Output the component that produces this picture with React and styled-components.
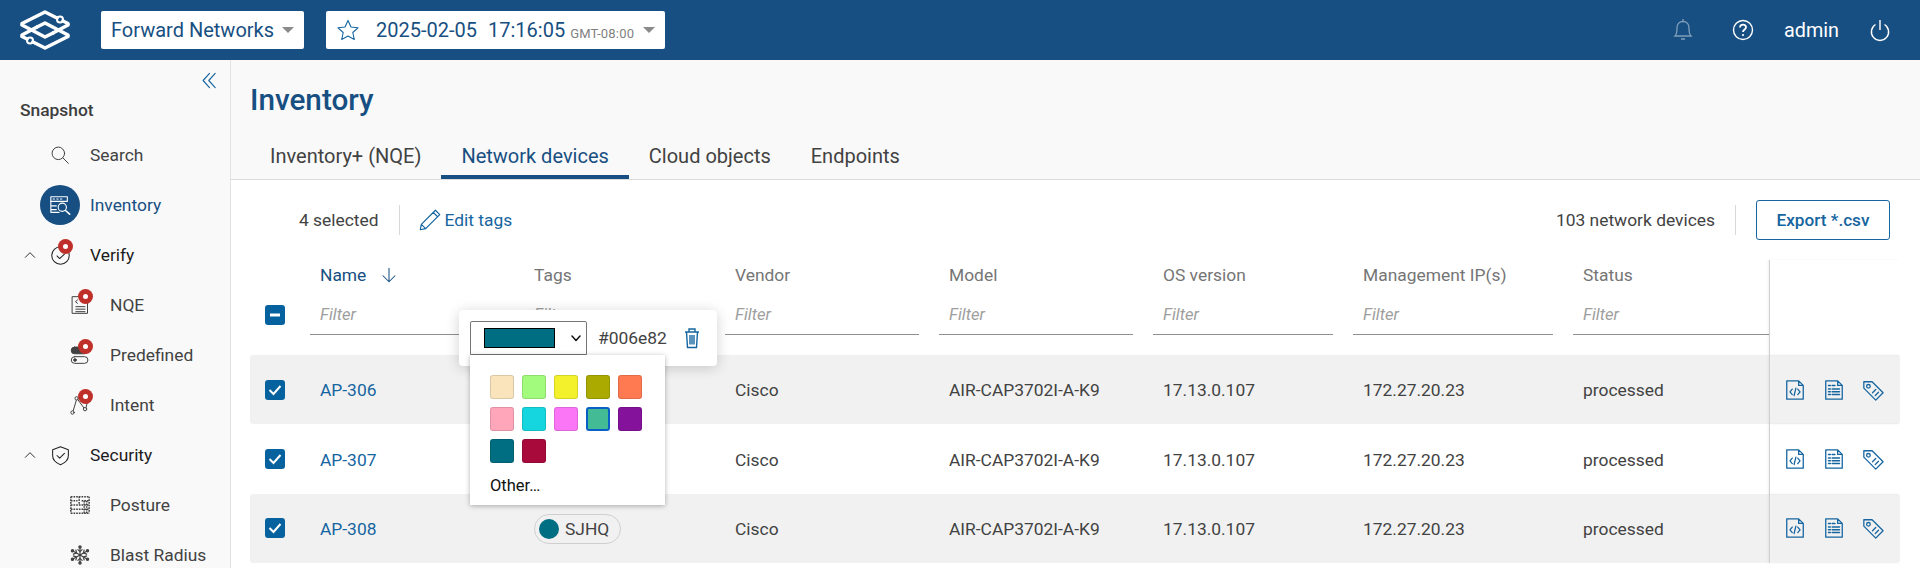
import React from 'react';
import styled, { createGlobalStyle } from 'styled-components';

const NAVY = '#174f82';
const BLUE = '#1565a0';
const TEXT = '#424242';
const GRID = '60px 214px 201px 214px 214px 200px 220px 196px 131px';

const GlobalStyle = createGlobalStyle`
  html, body {
    margin: 0;
    height: 100%;
    overflow: hidden;
    background: #fff;
    font-family: Roboto, "Liberation Sans", sans-serif;
    color: ${TEXT};
  }
  * { box-sizing: border-box; }
`;

const Page = styled.div`
  display: flex;
  flex-direction: column;
  height: 568px;
  overflow: hidden;
`;

const TopBar = styled.header`
  flex: 0 0 60px;
  display: flex;
  align-items: center;
  padding: 0 29px 0 20px;
  background: ${NAVY};
`;

const LogoMark = styled.svg`
  width: 50px;
  height: 40px;
  margin-right: 31px;
`;

const Picker = styled.div`
  display: flex;
  align-items: center;
  height: 38px;
  margin-right: 22px;
  padding: 0 10px;
  background: #fff;
  border-radius: 2px;
  color: ${NAVY};
  font-size: 20px;
  white-space: nowrap;
`;

const Caret = styled.span`
  width: 0;
  height: 0;
  margin-left: ${props => props.$gap}px;
  border-left: 6px solid transparent;
  border-right: 6px solid transparent;
  border-top: 6px solid #8a8a8a;
`;

const Zone = styled.span`
  margin-left: 5px;
  color: #7f7f7f;
  font-size: 13px;
  letter-spacing: 0.2px;
  align-self: flex-end;
  padding-bottom: 8px;
`;

const Stamp = styled.span`
  margin-left: 16px;
  & + & { margin-left: 11px; }
`;

const TopActions = styled.div`
  display: flex;
  align-items: center;
  margin-left: auto;
  color: #fff;
  font-size: 19.8px;
`;

const TopIcon = styled.svg`
  width: 22px;
  height: 24px;
  margin-left: ${props => props.$gap}px;
  opacity: ${props => (props.$dim ? 0.45 : 1)};
`;

const UserName = styled.span`
  margin-left: 30px;
`;

const Body = styled.div`
  flex: 1;
  display: flex;
  min-height: 0;
`;

const Sidebar = styled.aside`
  flex: 0 0 231px;
  padding-top: 12px;
  background: #f9f9f9;
  border-right: 1px solid #e2e2e2;
  overflow: hidden;
`;

const Collapse = styled.div`
  display: flex;
  justify-content: flex-end;
  height: 16px;
  padding-right: 12px;
`;

const SideTitle = styled.div`
  height: 42px;
  padding: 12px 0 0 20px;
  color: #3d3d3d;
  font-size: 17.4px;
  font-weight: 500;
  line-height: 20px;
`;

const SideRow = styled.div`
  display: flex;
  align-items: center;
  height: 50px;
  padding-left: ${props => (props.$child ? 40 : 20)}px;
  color: ${props => (props.$active ? NAVY : props.$group ? '#1c1c1c' : TEXT)};
  font-size: 17.4px;
`;

const Toggle = styled.span`
  flex: 0 0 20px;
  display: flex;
  justify-content: center;
`;

const IconSlot = styled.span`
  position: relative;
  flex: 0 0 40px;
  height: 40px;
  margin-right: 10px;
  display: flex;
  align-items: center;
  justify-content: center;
  border-radius: 50%;
  background: ${props => (props.$active ? NAVY : 'transparent')};
  margin-left: ${props => (props.$child ? 20 : 0)}px;
`;

const Badge = styled.span`
  position: absolute;
  top: 4px;
  left: 18px;
  width: 15px;
  height: 15px;
  border-radius: 50%;
  background: #c0302a;
  &::after {
    content: '';
    position: absolute;
    top: 5px;
    left: 5px;
    width: 5px;
    height: 5px;
    border-radius: 50%;
    background: #fff;
  }
`;

const Main = styled.main`
  flex: 1;
  min-width: 0;
`;

const MainHead = styled.div`
  height: 120px;
  padding: 0 0 0 19px;
  display: flex;
  flex-direction: column;
  background: #f9f9f9;
  border-bottom: 1px solid #dcdcdc;
`;

const PageTitle = styled.h1`
  margin: 0;
  padding-top: 20px;
  height: 76px;
  color: ${NAVY};
  font-size: 29.7px;
  font-weight: 500;
  line-height: 40px;
`;

const Tabs = styled.nav`
  display: flex;
  height: 43px;
`;

const Tab = styled.div`
  padding: 8px 20px 0;
  color: ${props => (props.$on ? NAVY : TEXT)};
  font-size: 20px;
  line-height: 24px;
  border-bottom: 4px solid ${props => (props.$on ? NAVY : 'transparent')};
`;

const Content = styled.div`
  padding: 0 20px 0 19px;
`;

const Toolbar = styled.div`
  display: flex;
  align-items: center;
  height: 80px;
  padding: 0 10px 0 49px;
  font-size: 17.4px;
`;

const Rule = styled.span`
  width: 1px;
  height: 30px;
  margin: 0 20px;
  background: #d8d8d8;
`;

const EditLink = styled.span`
  display: flex;
  align-items: center;
  gap: 2px;
  margin-left: -3px;
  color: ${BLUE};
`;

const Count = styled.span`
  margin-left: auto;
`;

const ExportButton = styled.button`
  width: 134px;
  height: 40px;
  padding: 0;
  background: #fff;
  border: 1px solid ${BLUE};
  border-radius: 3px;
  color: ${BLUE};
  font: 500 17.2px Roboto, sans-serif;
`;

const TableWrap = styled.div`
  position: relative;
`;

const Grid = styled.div`
  display: grid;
  grid-template-columns: ${GRID};
  align-items: stretch;
`;

const HeadRow = styled(Grid)`
  height: 95px;
`;

const HeadCell = styled.div`
  padding-right: ${props => (props.$last ? 0 : 20)}px;
  display: flex;
  flex-direction: column;
`;

const HeadLabel = styled.div`
  display: flex;
  align-items: center;
  gap: 14px;
  height: 30px;
  padding-left: 10px;
  color: ${props => (props.$sorted ? NAVY : '#757575')};
  font-size: 17.4px;
`;

const FilterBox = styled.div`
  height: 45px;
  padding: 15px 0 0 10px;
  color: #9e9e9e;
  font-size: 16.6px;
  font-style: italic;
  line-height: 20px;
  border-bottom: 1px solid #8f8f8f;
`;

const CheckCell = styled.div`
  display: flex;
  align-items: ${props => (props.$head ? 'flex-end' : 'center')};
  padding-left: 15px;
  padding-bottom: ${props => (props.$head ? 30 : 0)}px;
`;

const CheckBox = styled.span`
  width: 20px;
  height: 20px;
  display: flex;
  align-items: center;
  justify-content: center;
  background: #05629f;
  border-radius: 3px;
`;

const ActionsCell = styled.div`
  display: flex;
  align-items: center;
  gap: 17px;
  padding-left: 14px;
  border-left: 1px solid #cfcfcf;
  box-shadow: -1px 0 2px rgba(0, 0, 0, 0.06);
`;

const Row = styled(Grid)`
  height: 69.4px;
  background: ${props => (props.$shade ? '#f1f1f1' : '#fff')};
  border-radius: 3px;
`;

const Cell = styled.div`
  display: flex;
  align-items: center;
  padding: 1px 0 0 10px;
  font-size: 17.4px;
  color: ${props => (props.$link ? BLUE : TEXT)};
`;

const Chip = styled.span`
  display: flex;
  align-items: center;
  gap: 6px;
  height: 30px;
  padding: 0 11px 0 4px;
  border: 1px solid #cfcfcf;
  border-radius: 15px;
`;

const Dot = styled.span`
  width: 20px;
  height: 20px;
  border-radius: 50%;
  background: #006e82;
`;

const ColorPopover = styled.div`
  position: absolute;
  top: 50px;
  left: 209px;
  width: 258px;
  height: 56px;
  display: flex;
  align-items: center;
  padding: 0 0 0 11px;
  background: #fff;
  border-radius: 4px;
  box-shadow: 0 2px 14px rgba(0, 0, 0, 0.18);
  font-size: 17.4px;
`;

const ColorSelect = styled.div`
  flex: 0 0 117px;
  height: 34px;
  display: flex;
  align-items: center;
  padding: 0 4px 0 13px;
  border: 1px solid #767676;
  border-radius: 2px 2px 0 0;
  margin-right: 11px;
`;

const SelectedColor = styled.span`
  flex: 0 0 71px;
  height: 20px;
  background: #006e82;
  border: 1px solid #000;
  margin-right: 15px;
`;

const TrashIcon = styled.svg`
  width: 18px;
  height: 22px;
  margin-left: 16px;
`;

const ColorMenu = styled.div`
  position: absolute;
  top: 45px;
  left: 11px;
  width: 195px;
  height: 150px;
  padding: 20px;
  background: #fff;
  box-shadow: 0 1px 5px rgba(0, 0, 0, 0.3);
`;

const Swatches = styled.div`
  display: grid;
  grid-template-columns: repeat(5, 24px);
  grid-auto-rows: 24px;
  gap: 8px;
`;

const Swatch = styled.span`
  border-radius: 3px;
  background: ${props => props.$color};
  border: ${props => (props.$on ? '2px solid #0a5fc4' : '1px solid rgba(0, 0, 0, 0.12)')};
`;

const OtherItem = styled.div`
  margin-top: 13px;
  color: #111;
  font-size: 16.5px;
  line-height: 20px;
`;

const Line = props => (
  <svg viewBox="0 0 24 24" width={props.size || 20} height={props.size || 20} fill="none" stroke={props.color || TEXT} strokeWidth={props.weight || 1.2} strokeLinecap="round" strokeLinejoin="round">
    {props.children}
  </svg>
);

// two interlocked rhombi, each left open where its connector circle sits
const Logo = () => (
  <LogoMark viewBox="0 0 50 40" fill="none" stroke="#fff" strokeWidth="3.6" strokeLinejoin="round" strokeLinecap="round">
    <path d="M37 8 L25 2 L2 13.5 L2 15 L25 27 L33 23" />
    <path d="M43 11 L48 13.5 L48 15 L33 23" />
    <path d="M13 32 L25 38 L48 26.5 L48 25 L25 13 L17 17" />
    <path d="M7 29 L2 26.5 L2 25 L17 17" />
    <circle cx="40" cy="9.5" r="3" strokeWidth="2" />
    <circle cx="10" cy="30.5" r="3" strokeWidth="2" />
  </LogoMark>
);

const NAV_ICONS = {
  search: (
    <Line>
      <circle cx="10" cy="10" r="7.5" />
      <path d="M15.5 15.5 L22 22" />
    </Line>
  ),
  inventory: (
    <Line size={22} color="#fff">
      <rect x="2" y="3" width="18" height="5" />
      <path d="M4.5 5.5 H6 M8.5 5.5 H10 M12.5 5.5 H14" />
      <path d="M2 8 V20 H11 M2 13 H8 M2 17 H8" />
      <circle cx="14.5" cy="14.5" r="4.5" />
      <path d="M18 18 L22.5 22" strokeWidth="1.8" />
    </Line>
  ),
  verify: (
    <Line size={21} color="#222">
      <circle cx="12" cy="12" r="10" strokeDasharray="50 6" />
      <path d="M8 12.5 L11 15.5 L16.5 10.5" />
    </Line>
  ),
  nqe: (
    <Line>
      <path d="M3 2 H21 V22 H3 Z" />
      <path d="M9 6 L6.5 8 L9 10 M7 14 H18 M7 17 H18 M7 20 H18" />
    </Line>
  ),
  predefined: (
    <Line>
      <rect x="1.5" y="2.5" width="20" height="8" rx="4" fill={TEXT} />
      <rect x="1.5" y="14" width="20" height="8" rx="4" />
      <circle cx="6" cy="18" r="1.6" fill={TEXT} />
    </Line>
  ),
  intent: (
    <Line>
      <path d="M8 5 L3.5 20 M9 5 L17 16 M19 16 L22 4" />
      <circle cx="8" cy="4" r="2" fill="#f9f9f9" />
      <circle cx="3" cy="21" r="2" fill="#f9f9f9" />
      <circle cx="18" cy="17" r="2" fill="#f9f9f9" />
    </Line>
  ),
  security: (
    <Line size={21} color="#222">
      <path d="M12 2 L21 5.5 V12 C21 17 17 20.5 12 22.5 C7 20.5 3 17 3 12 V5.5 Z" />
      <path d="M8 12 L11 15 L16.5 9.5" />
    </Line>
  ),
  posture: (
    <svg viewBox="0 0 24 24" width="20" height="20" fill="none" stroke={TEXT} strokeWidth="1.8" strokeDasharray="2 1.2">
      <path d="M1 2 H23 M1 7 H9 M14 7 H23 M1 12 H23 M1 17 H23 M1 22 H23" />
      <path d="M1 2 V22 M23 2 V22 M11 2 V12 M17 7 V22 M20 7 V22" />
    </svg>
  ),
  blast: (
    <Line weight={1.4}>
      <path d="M12 3 V21 M4 7.5 L20 16.5 M20 7.5 L4 16.5" />
      <path d="M9.5 5.5 L12 8 L14.5 5.5 M9.5 18.5 L12 16 L14.5 18.5 M4 11 L8 9.5 L7 6 M20 11 L16 9.5 L17 6 M4 13 L8 14.5 L7 18 M20 13 L16 14.5 L17 18" />
      <g fill={TEXT}>
        <circle cx="12" cy="2.5" r="1.4" />
        <circle cx="12" cy="21.5" r="1.4" />
        <circle cx="3" cy="7" r="1.4" />
        <circle cx="21" cy="7" r="1.4" />
        <circle cx="3" cy="17" r="1.4" />
        <circle cx="21" cy="17" r="1.4" />
      </g>
    </Line>
  ),
};

const NAV = [
  { key: 'search', label: 'Search' },
  { key: 'inventory', label: 'Inventory', active: true },
  { key: 'verify', label: 'Verify', group: true, badge: true },
  { key: 'nqe', label: 'NQE', child: true, badge: true },
  { key: 'predefined', label: 'Predefined', child: true, badge: true },
  { key: 'intent', label: 'Intent', child: true, badge: true },
  { key: 'security', label: 'Security', group: true },
  { key: 'posture', label: 'Posture', child: true },
  { key: 'blast', label: 'Blast Radius', child: true },
];

const COLUMNS = ['Name', 'Tags', 'Vendor', 'Model', 'OS version', 'Management IP(s)', 'Status'];

const DEVICES = ['AP-306', 'AP-307', 'AP-308'];

const SWATCHES = [
  '#f9e4bc', '#a2fb7d', '#f3f12b', '#aaaa00', '#ff7a50',
  '#ffa6ba', '#15d6df', '#fb75f7', '#43bb95', '#85129a',
  '#006e82', '#a80a3c',
];

const NavRow = ({ item }) => (
  <SideRow $child={item.child} $group={item.group} $active={item.active}>
    {!item.child && (
      <Toggle>
        {item.group && (
          <Line size={14} weight={1.6} color="#222">
            <path d="M4 16 L12 8 L20 16" />
          </Line>
        )}
      </Toggle>
    )}
    <IconSlot $active={item.active} $child={item.child}>
      {NAV_ICONS[item.key]}
      {item.badge && <Badge />}
    </IconSlot>
    {item.label}
  </SideRow>
);

const RowActions = () => (
  <ActionsCell>
    <Line size={22} color={BLUE} weight={1.4}>
      <path d="M3 2 H16 L21 7 V22 H3 Z M16 2 V7 H21" />
      <path d="M9 11 L6.5 14 L9 17 M15 11 L17.5 14 L15 17 M13 10 L11 18" />
    </Line>
    <Line size={22} color={BLUE} weight={1.4}>
      <path d="M3 2 H16 L21 7 V22 H3 Z M16 2 V7 H21" />
      <path d="M6 7 H8 M6 11 H8 M6 14 H8 M6 17 H8 M10 11 H18 M10 14 H18 M10 17 H18 M10 7 H13" strokeWidth="1.6" />
    </Line>
    <Line size={22} color={BLUE} weight={1.4}>
      <path d="M2 3 H11 L23 15 L15 23 L2 10 Z" />
      <circle cx="7" cy="8" r="2" />
      <path d="M11.5 15 L15 11.5 M14.5 18 L18 14.5" />
    </Line>
  </ActionsCell>
);

const App = () => (
  <Page>
    <GlobalStyle />
    <TopBar>
      <Logo />
      <Picker>
        Forward Networks
        <Caret $gap={8} />
      </Picker>
      <Picker>
        <Line size={24} color={BLUE} weight={1.1}>
          <path d="M12 2.5 L15 9 L22 9.8 L16.8 14.5 L18.3 21.5 L12 18 L5.7 21.5 L7.2 14.5 L2 9.8 L9 9 Z" />
        </Line>
        <Stamp>2025-02-05</Stamp>
        <Stamp>17:16:05</Stamp>
        <Zone>GMT-08:00</Zone>
        <Caret $gap={9} />
      </Picker>
      <TopActions>
        <TopIcon $dim viewBox="0 0 22 24" fill="none" stroke="#fff" strokeWidth="1.3">
          <path d="M3 18 C5 16 5 14 5 10 C5 6 7.5 3.5 11 3.5 C14.5 3.5 17 6 17 10 C17 14 17 16 19 18 Z" />
          <path d="M9 21 H13 M11 1 V3" />
        </TopIcon>
        <TopIcon $gap={38} viewBox="0 0 22 24" fill="none" stroke="#fff" strokeWidth="1.4">
          <circle cx="11" cy="12" r="9.5" />
          <path d="M8 9.5 C8 7.5 9.4 6.6 11 6.6 C12.8 6.6 14 7.8 14 9.2 C14 11.4 11 11.5 11 14" strokeWidth="1.8" />
          <circle cx="11" cy="17" r="1.1" fill="#fff" stroke="none" />
        </TopIcon>
        <UserName>admin</UserName>
        <TopIcon $gap={30} viewBox="0 0 22 24" fill="none" stroke="#fff" strokeWidth="1.4">
          <path d="M6.5 6.5 A8.6 8.6 0 1 0 15.5 6.5 M11 2 V12" />
        </TopIcon>
      </TopActions>
    </TopBar>
    <Body>
      <Sidebar>
        <Collapse>
          <Line size={17} color={BLUE} weight={1.6}>
            <path d="M12 2 L3 12 L12 22 M20 2 L11 12 L20 22" />
          </Line>
        </Collapse>
        <SideTitle>Snapshot</SideTitle>
        {NAV.map(item => (
          <NavRow key={item.key} item={item} />
        ))}
      </Sidebar>
      <Main>
        <MainHead>
          <PageTitle>Inventory</PageTitle>
          <Tabs>
            <Tab>Inventory+ (NQE)</Tab>
            <Tab $on>Network devices</Tab>
            <Tab>Cloud objects</Tab>
            <Tab>Endpoints</Tab>
          </Tabs>
        </MainHead>
        <Content>
          <Toolbar>
            4 selected
            <Rule />
            <EditLink>
              <Line size={26} color={BLUE} weight={1.1}>
                <path d="M3 21 L4 16 L17 3 L21 7 L8 20 Z M15 5 L19 9 M4 16 L8 20" />
              </Line>
              Edit tags
            </EditLink>
            <Count>103 network devices</Count>
            <Rule />
            <ExportButton>Export *.csv</ExportButton>
          </Toolbar>
          <TableWrap>
            <HeadRow>
              <CheckCell $head>
                <CheckBox>
                  <svg width="12" height="12" viewBox="0 0 12 12">
                    <rect x="1" y="4.5" width="10" height="3" fill="#fff" />
                  </svg>
                </CheckBox>
              </CheckCell>
              {COLUMNS.map((name, i) => (
                <HeadCell key={name} $last={i === COLUMNS.length - 1}>
                  <HeadLabel $sorted={i === 0}>
                    <span>{name}</span>
                    {i === 0 && (
                      <Line size={18} color={NAVY} weight={1.4}>
                        <path d="M12 3 V21 M4 13 L12 21 L20 13" />
                      </Line>
                    )}
                  </HeadLabel>
                  <FilterBox>Filter</FilterBox>
                </HeadCell>
              ))}
              <ActionsCell />
            </HeadRow>
            {DEVICES.map((name, i) => (
              <Row key={name} $shade={i % 2 === 0}>
                <CheckCell>
                  <CheckBox>
                    <svg width="14" height="12" viewBox="0 0 14 12" fill="none" stroke="#fff" strokeWidth="2">
                      <path d="M1.5 6 L5.5 10 L12.5 2" />
                    </svg>
                  </CheckBox>
                </CheckCell>
                <Cell $link>{name}</Cell>
                <Cell>
                  <Chip>
                    <Dot />
                    SJHQ
                  </Chip>
                </Cell>
                <Cell>Cisco</Cell>
                <Cell>AIR-CAP3702I-A-K9</Cell>
                <Cell>17.13.0.107</Cell>
                <Cell>172.27.20.23</Cell>
                <Cell>processed</Cell>
                <RowActions />
              </Row>
            ))}
            <ColorPopover>
              <ColorSelect>
                <SelectedColor />
                <Line size={12} color="#111" weight={3}>
                  <path d="M4 8 L12 17 L20 8" />
                </Line>
              </ColorSelect>
              #006e82
              <TrashIcon viewBox="0 0 18 22" fill="none" stroke={BLUE} strokeWidth="1.4">
                <path d="M2 5 H16 M6 5 V2 H12 V5 M3.5 5 L4.5 20.5 H13.5 L14.5 5" />
                <path d="M7 8 V17.5 M9 8 V17.5 M11 8 V17.5" />
              </TrashIcon>
              <ColorMenu>
                <Swatches>
                  {SWATCHES.map((color, i) => (
                    <Swatch key={color} $color={color} $on={i === 8} />
                  ))}
                </Swatches>
                <OtherItem>Other…</OtherItem>
              </ColorMenu>
            </ColorPopover>
          </TableWrap>
        </Content>
      </Main>
    </Body>
  </Page>
);

export default App;
